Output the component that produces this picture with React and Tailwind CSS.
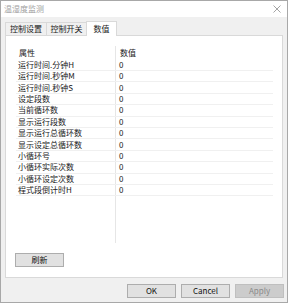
import React from 'react';

const rows = [
  '运行时间.分钟H',
  '运行时间.秒钟M',
  '运行时间.秒钟S',
  '设定段数',
  '当前循环数',
  '显示运行段数',
  '显示运行总循环数',
  '显示设定总循环数',
  '小循环号',
  '小循环实际次数',
  '小循环设定次数',
  '程式段倒计时H',
];

function DlgButton({ children, disabled }) {
  return (
    <div
      className={`w-[49px] h-[14px] flex items-center justify-center border text-[8px] leading-none ${
        disabled ? 'bg-[#cccccc] border-[#bfbfbf] text-[#8a8a8a]' : 'bg-[#e1e1e1] border-[#adadad] text-[#111]'
      }`}
    >
      {children}
    </div>
  );
}

export default function App() {
  return (
    <div className="w-[288px] h-[303px] bg-[#f0f0f0] border border-[#a8a8a8] flex flex-col font-['Noto_Sans_CJK_SC',sans-serif] text-[8px] leading-none text-[#1a1a1a]">
      {/* title bar */}
      <div className="h-[16px] bg-white flex items-center justify-between pl-[3px] pr-[6px]">
        <span className="text-[#a0a0a0] text-[8px]">温湿度监测</span>
        <svg width="8" height="8" viewBox="0 0 8 8">
          <path d="M0.5 0.5 L7.5 7.5 M7.5 0.5 L0.5 7.5" stroke="#9a9a9a" strokeWidth="0.9" fill="none" />
        </svg>
      </div>

      {/* tabs */}
      <div className="h-[18px] flex items-end pl-[4px]">
        <div className="w-[42px] h-[13px] border border-b-0 border-[#d9d9d9] flex items-center justify-center">控制设置</div>
        <div className="w-[41px] h-[13px] -ml-px border border-b-0 border-[#d9d9d9] flex items-center justify-center">控制开关</div>
        <div className="w-[31px] h-[15px] -ml-px -mb-px relative z-10 bg-white border border-b-0 border-[#d9d9d9] flex items-center justify-center">数值</div>
      </div>

      {/* panel */}
      <div className="ml-[4px] w-[278px] h-[243px] bg-white border border-[#d9d9d9] pt-[10px] pl-[9px] flex flex-col">
        <div className="ml-[1px] w-[257px] h-[197px] flex flex-col">
          <div className="h-[13.6px] flex">
            <div className="w-[100px] border-r border-[#e6e6e6] pl-[3px] flex items-center">属性</div>
            <div className="pl-[4px] flex items-center">数值</div>
          </div>
          {rows.map((r) => (
            <div key={r} className="h-[11.4px] flex border-b border-[#f0f0f0]">
              <div className="w-[100px] border-r border-[#e6e6e6] pl-[2px] flex items-center">{r}</div>
              <div className="pl-[3px] flex items-center">0</div>
            </div>
          ))}
          <div className="flex-1 flex">
            <div className="w-[100px] border-r border-[#e6e6e6]" />
          </div>
        </div>
        <div className="mt-[10px]">
          <DlgButton>刷新</DlgButton>
        </div>
      </div>

      {/* dialog buttons */}
      <div className="mt-[6px] pr-[3px] flex justify-end gap-[5px]">
        <DlgButton>OK</DlgButton>
        <DlgButton>Cancel</DlgButton>
        <DlgButton disabled>Apply</DlgButton>
      </div>
    </div>
  );
}
